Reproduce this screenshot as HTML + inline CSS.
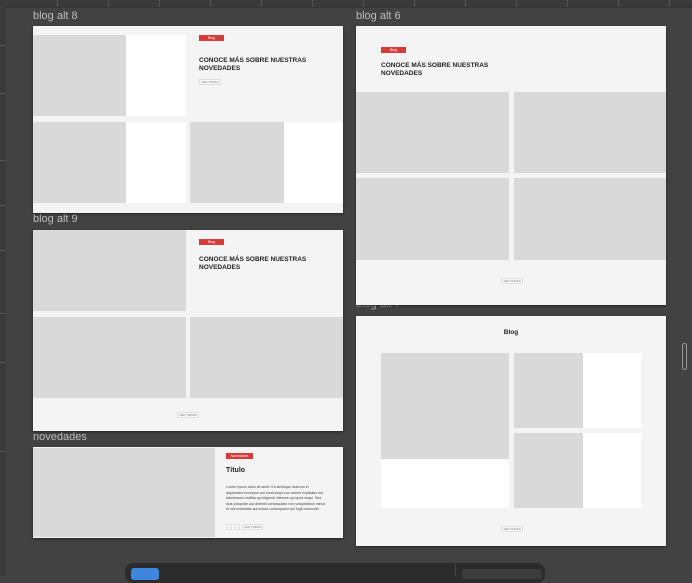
<!DOCTYPE html><html><head><style>
body{margin:0;width:692px;height:576px;background:#424242;position:relative;overflow:hidden;font-family:"Liberation Sans",sans-serif}
div{position:absolute;box-sizing:border-box}
.f{background:#f4f4f4;box-shadow:0 1px 2px #222}
.g{background:#d9d9d9}.w{background:#fff}
.lb{color:#bdbdbd;font-size:11px}
.b{background:#d63a3a;color:#fff;font-size:3.5px;text-align:center;line-height:6px;height:6px}
.t{font-weight:bold;font-size:6.5px;color:#222;line-height:7.5px}
.v{border:1px solid #ddd;background:#fafafa;font-size:3px;color:#777;text-align:center;line-height:5px;height:6px;width:22px}
.tk{top:0;width:1px;height:7px;background:#555}
.tl{left:0;width:6px;height:1px;background:#555}
</style></head><body>
<div style="left:0;top:0;width:692px;height:8px;background:#3a3a3a;border-bottom:1px solid #333"></div>
<div class="tk" style="left:108px"></div><div class="tk" style="left:210px"></div><div class="tk" style="left:312px"></div><div class="tk" style="left:414px"></div><div class="tk" style="left:516px"></div><div class="tk" style="left:618px"></div>
<div class="tk" style="left:159px"></div><div class="tk" style="left:261px"></div><div class="tk" style="left:363px"></div><div class="tk" style="left:465px"></div><div class="tk" style="left:567px"></div><div class="tk" style="left:669px"></div><div class="tk" style="left:57px"></div>
<div style="left:0;top:0;width:6px;height:576px;background:#3a3a3a"></div>
<div class="tl" style="top:45px"></div><div class="tl" style="top:93px"></div><div class="tl" style="top:160px"></div><div class="tl" style="top:205px"></div><div class="tl" style="top:250px"></div><div class="tl" style="top:313px"></div><div class="tl" style="top:362px"></div><div class="tl" style="top:451px"></div>
<div class="lb" style="left:33px;top:10px">blog alt 8</div>
<div class="lb" style="left:356px;top:10px">blog alt 6</div>
<div class="lb" style="left:33px;top:213px">blog alt 9</div>
<div class="lb" style="left:33px;top:431px">novedades</div>
<div class="lb" style="left:356px;top:298px">blog alt 7</div>
<!-- alt8 -->
<div class="f" style="left:33px;top:26px;width:310px;height:187px">
<div class="g" style="left:0;top:9px;width:93px;height:81px"></div>
<div class="w" style="left:93px;top:9px;width:60px;height:81px"></div>
<div class="b" style="left:166px;top:9px;width:25px">Blog</div>
<div class="t" style="left:166px;top:31px;width:120px">CONOCE MÁS SOBRE NUESTRAS NOVEDADES</div>
<div class="v" style="left:166px;top:53px;width:22px">VER TODAS</div>
<div class="g" style="left:0;top:96px;width:93px;height:81px"></div>
<div class="w" style="left:93px;top:96px;width:60px;height:81px"></div>
<div class="g" style="left:157px;top:96px;width:94px;height:81px"></div>
<div class="w" style="left:251px;top:96px;width:59px;height:81px"></div>
</div>
<!-- alt6 -->
<div class="f" style="left:356px;top:26px;width:310px;height:279px">
<div class="b" style="left:25px;top:21px;width:25px">Blog</div>
<div class="t" style="left:25px;top:36px;width:120px">CONOCE MÁS SOBRE NUESTRAS NOVEDADES</div>
<div class="g" style="left:0;top:66px;width:153px;height:81px"></div>
<div class="g" style="left:158px;top:66px;width:152px;height:81px"></div>
<div class="g" style="left:0;top:152px;width:153px;height:82px"></div>
<div class="g" style="left:158px;top:152px;width:152px;height:82px"></div>
<div class="v" style="left:145px;top:252px">VER TODAS</div>
</div>
<!-- alt9 -->
<div class="f" style="left:33px;top:230px;width:310px;height:201px">
<div class="g" style="left:0;top:0;width:153px;height:81px"></div>
<div class="b" style="left:166px;top:9px;width:25px">Blog</div>
<div class="t" style="left:166px;top:26px;width:120px">CONOCE MÁS SOBRE NUESTRAS NOVEDADES</div>
<div class="g" style="left:0;top:87px;width:153px;height:81px"></div>
<div class="g" style="left:157px;top:87px;width:153px;height:81px"></div>
<div class="v" style="left:144px;top:182px">VER TODAS</div>
</div>
<!-- alt7 -->
<div class="f" style="left:356px;top:316px;width:310px;height:230px">
<div class="t" style="left:0;top:13px;width:310px;text-align:center">Blog</div>
<div class="g" style="left:25px;top:37px;width:128px;height:106px"></div>
<div class="w" style="left:25px;top:143px;width:128px;height:49px"></div>
<div class="g" style="left:158px;top:37px;width:69px;height:75px"></div>
<div class="w" style="left:227px;top:37px;width:58px;height:75px"></div>
<div class="g" style="left:158px;top:117px;width:69px;height:75px"></div>
<div class="w" style="left:227px;top:117px;width:58px;height:75px"></div>
<div class="v" style="left:145px;top:210px">VER TODAS</div>
</div>
<!-- novedades -->
<div class="f" style="left:33px;top:447px;width:310px;height:91px">
<div class="g" style="left:0;top:1px;width:182px;height:89px"></div>
<div class="b" style="left:193px;top:6px;width:27px">Novedades</div>
<div class="t" style="left:193px;top:20px;font-size:7px">Título</div>
<div style="left:193px;top:38px;width:100px;font-size:3.6px;line-height:5.5px;color:#444">Lorem ipsum dolor sit amet. Ea similique dolorum in aspernatur excepturi aut modi sequi non autem explicabo est laboriosam mollitia qui eligendi internos qui quos sequi. Sed duis voluptate aut deleniti consequatur rum voluptatibus minus et nisi molestias aut soluta consequatur qui fugit commodi!</div>
<div class="v" style="left:193px;top:77px;width:6px">‹</div>
<div class="v" style="left:201px;top:77px;width:6px">›</div>
<div class="v" style="left:209px;top:77px;width:21px">VER TODAS</div>
</div>
<div style="left:682px;top:343px;width:5px;height:27px;border:1px solid #999;border-radius:3px"></div>
<div style="left:125px;top:563px;width:420px;height:20px;background:#2c2c2c;border-radius:8px"></div>
<div style="left:131px;top:568px;width:28px;height:12px;background:#3d86dc;border-radius:3px"></div>
<div style="left:455px;top:563px;width:1px;height:13px;background:#444"></div>
<div style="left:462px;top:569px;width:80px;height:10px;background:#3c3c3c;border-radius:3px"></div>
</body></html>
